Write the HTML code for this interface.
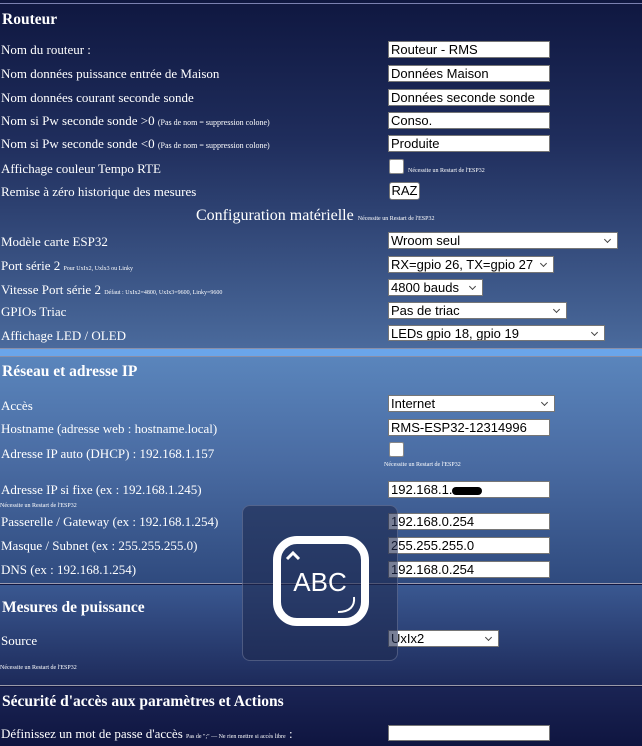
<!DOCTYPE html>
<html><head><meta charset="utf-8">
<style>
*{margin:0;padding:0;box-sizing:border-box}
body{width:642px;height:746px;overflow:hidden;position:relative;font-family:"Liberation Serif",serif;color:#fff;background:#101540}
.s{position:absolute;left:0;width:642px}
.t{position:absolute;left:1px;font-size:13px;white-space:nowrap;line-height:15px}
.h{position:absolute;left:2px;font-size:15.5px;font-weight:bold;white-space:nowrap}
.sm{font-size:8px}
.tiny{position:absolute;font-size:6px;white-space:nowrap}
.in{position:absolute;left:388px;width:162px;height:17px;background:#fff;border:1px solid #767676;color:#000;font-family:"Liberation Sans",sans-serif;font-size:13px;line-height:15px;padding-left:2px;white-space:nowrap;overflow:hidden}
.sel{position:absolute;left:388px;height:17px;background:#fff;border:1px solid #767676;color:#000;font-family:"Liberation Sans",sans-serif;font-size:13px;line-height:15px;padding-left:2px;white-space:nowrap;overflow:hidden}
.sel:after{content:"";position:absolute;right:7px;top:4px;width:4px;height:4px;border-right:1px solid #444;border-bottom:1px solid #444;transform:rotate(45deg)}
.cb{position:absolute;left:389px;width:15px;height:15px;background:#fff;border-radius:2px;border:1px solid #888}
.line{position:absolute;left:0;width:642px;height:1px;background:#8a8fa8}
</style></head><body>
<div class="s" style="top:0;height:348px;background:linear-gradient(#0f1740,#1f2d5c 40%,#4a6a9c)"></div>
<div class="line" style="top:3px;background:#7a80b0"></div>
<div class="line" style="top:348px"></div>
<div class="s" style="top:349px;height:7px;background:#6aa5ea"></div>
<div class="line" style="top:356px"></div>
<div class="s" style="top:357px;height:227px;background:linear-gradient(#5a85bc,#4a6ca3 45%,#2f4a7e)"></div>
<div class="line" style="top:583px;background:#9a9ab0"></div>
<div class="s" style="top:585px;height:100px;background:linear-gradient(#3a5891,#1d2a5a)"></div>
<div class="line" style="top:685px;background:#9a9aa8"></div>
<div class="s" style="top:687px;height:59px;background:linear-gradient(#1a2454,#0f1540)"></div>

<div class="h" style="top:11px">Routeur</div>
<div class="t" style="top:42px">Nom du routeur :</div>
<div class="t" style="top:66px">Nom données puissance entrée de Maison</div>
<div class="t" style="top:90px">Nom données courant seconde sonde</div>
<div class="t" style="top:113px">Nom si Pw seconde sonde &gt;0 <span class="sm">(Pas de nom = suppression colone)</span></div>
<div class="t" style="top:136px">Nom si Pw seconde sonde &lt;0 <span class="sm">(Pas de nom = suppression colone)</span></div>
<div class="t" style="top:161px">Affichage couleur Tempo RTE</div>
<div class="t" style="top:184px">Remise à zéro historique des mesures</div>
<div class="in" style="top:41px">Routeur - RMS</div>
<div class="in" style="top:65px">Données Maison</div>
<div class="in" style="top:89px">Données seconde sonde</div>
<div class="in" style="top:112px">Conso.</div>
<div class="in" style="top:135px">Produite</div>
<div class="cb" style="top:159px"></div>
<div class="tiny" style="left:408px;top:168px">Nécessite un Restart de l'ESP32</div>
<div style="position:absolute;left:389px;top:182px;width:31px;height:18px;background:#fff;border:1px solid #777;border-radius:3px;color:#000;font-family:'Liberation Sans',sans-serif;font-size:13px;line-height:16px;text-align:center">RAZ</div>
<div style="position:absolute;left:196px;top:207px;font-size:16px;white-space:nowrap">Configuration matérielle <span style="font-size:6px">Nécessite un Restart de l'ESP32</span></div>
<div class="t" style="top:234px">Modèle carte ESP32</div>
<div class="t" style="top:258px">Port série 2 <span style="font-size:6px">Pour UxIx2, Uxlx3 ou Linky</span></div>
<div class="t" style="top:282px">Vitesse Port série 2 <span style="font-size:6px">Défaut : UxIx2=4800, UxIx3=9600, Linky=9600</span></div>
<div class="t" style="top:304px">GPIOs Triac</div>
<div class="t" style="top:328px">Affichage LED / OLED</div>
<div class="sel" style="top:232px;width:230px">Wroom seul</div>
<div class="sel" style="top:256px;width:166px">RX=gpio 26, TX=gpio 27</div>
<div class="sel" style="top:279px;width:95px">4800 bauds</div>
<div class="sel" style="top:302px;width:179px">Pas de triac</div>
<div class="sel" style="top:325px;width:217px;height:16px">LEDs gpio 18, gpio 19</div>

<div class="h" style="top:363px">Réseau et adresse IP</div>
<div class="t" style="top:398px">Accès</div>
<div class="t" style="top:421px">Hostname (adresse web : hostname.local)</div>
<div class="t" style="top:446px">Adresse IP auto (DHCP) : 192.168.1.157</div>
<div class="t" style="top:482px">Adresse IP si fixe (ex : 192.168.1.245)</div>
<div class="tiny" style="left:0;top:503px">Nécessite un Restart de l'ESP32</div>
<div class="t" style="top:514px">Passerelle / Gateway (ex : 192.168.1.254)</div>
<div class="t" style="top:538px">Masque / Subnet (ex : 255.255.255.0)</div>
<div class="t" style="top:562px">DNS (ex : 192.168.1.254)</div>
<div class="sel" style="top:395px;width:167px">Internet</div>
<div class="in" style="top:419px">RMS-ESP32-12314996</div>
<div class="cb" style="top:442px"></div>
<div class="tiny" style="left:384px;top:462px">Nécessite un Restart de l'ESP32</div>
<div class="in" style="top:481px">192.168.1.<span style="display:inline-block;width:30px;height:8px;background:#000;border-radius:4px;vertical-align:middle"></span></div>
<div class="in" style="top:513px">192.168.0.254</div>
<div class="in" style="top:537px">255.255.255.0</div>
<div class="in" style="top:561px">192.168.0.254</div>

<div class="h" style="top:599px">Mesures de puissance</div>
<div class="t" style="top:633px">Source</div>
<div class="sel" style="top:630px;width:111px">UxIx2</div>
<div class="tiny" style="left:0;top:665px">Nécessite un Restart de l'ESP32</div>

<div class="h" style="top:693px">Sécurité d'accès aux paramètres et Actions</div>
<div class="t" style="top:726px">Définissez un mot de passe d'accès <span style="font-size:6px">Pas de ";" — Ne rien mettre si accès libre</span> :</div>
<div class="in" style="top:725px;height:16px"></div>

<div style="position:absolute;left:242px;top:505px;width:156px;height:156px;border-radius:8px;background:rgba(30,42,80,0.6);border:1px solid rgba(160,170,200,0.35)"></div>
<svg style="position:absolute;left:242px;top:505px" width="156" height="156" viewBox="0 0 156 156">
<rect x="35" y="35" width="88" height="82" rx="20" fill="none" stroke="#fff" stroke-width="8"/>
<path d="M45 54 L51 48 L57 54" fill="none" stroke="#fff" stroke-width="3"/>
<text x="78" y="86" text-anchor="middle" font-family="Liberation Sans,sans-serif" font-size="26" fill="#fff">ABC</text>
<path d="M112 92 C113 101 108 107 96 107" fill="none" stroke="#fff" stroke-width="2"/>
</svg>
</body></html>
